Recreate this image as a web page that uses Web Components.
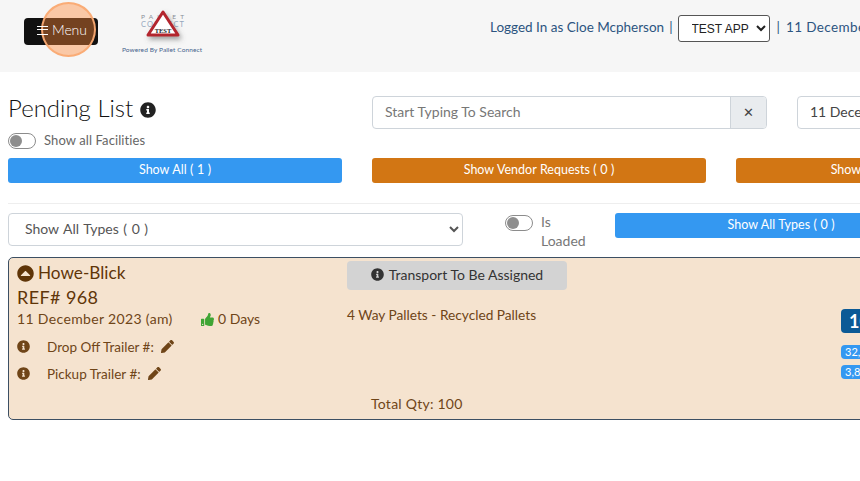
<!DOCTYPE html>
<html lang="en">
<head>
<meta charset="utf-8">
<title>Pending List</title>
<style>
  html, body { margin: 0; height: 100%; overflow: hidden; background: #fff; }
  body { font-family: Lato, "Noto Sans", sans-serif; color: #666; }
</style>
</head>
<body>
<app-header></app-header>
<pending-head></pending-head>
<filter-bar></filter-bar>
<order-card></order-card>

<script>
const ICONS = {
  info: ['0 0 512 512', 'M256 8C119.043 8 8 119.083 8 256c0 136.997 111.043 248 248 248s248-111.003 248-248C504 119.083 392.957 8 256 8zm0 110c23.196 0 42 18.804 42 42s-18.804 42-42 42-42-18.804-42-42 18.804-42 42-42zm56 254c0 6.627-5.373 12-12 12h-88c-6.627 0-12-5.373-12-12v-24c0-6.627 5.373-12 12-12h12v-64h-12c-6.627 0-12-5.373-12-12v-24c0-6.627 5.373-12 12-12h64c6.627 0 12 5.373 12 12v100h12c6.627 0 12 5.373 12 12v24z'],
  pencil: ['0 0 512 512', 'M497.9 142.1l-46.1 46.1c-4.7 4.7-12.3 4.7-17 0l-111-111c-4.7-4.7-4.7-12.3 0-17l46.1-46.1c18.7-18.7 49.1-18.7 67.9 0l60.1 60.1c18.8 18.7 18.8 49.1 0 67.9zM284.2 99.8L21.6 362.4.4 483.9c-2.9 16.4 11.4 30.6 27.8 27.8l121.5-21.3 262.6-262.6c4.7-4.7 4.7-12.3 0-17l-111-111c-4.8-4.7-12.4-4.7-17.1 0z'],
  thumb: ['0 0 512 512', 'M104 224H24c-13.255 0-24 10.745-24 24v240c0 13.255 10.745 24 24 24h80c13.255 0 24-10.745 24-24V248c0-13.255-10.745-24-24-24zM64 472c-13.255 0-24-10.745-24-24s10.745-24 24-24 24 10.745 24 24-10.745 24-24 24zM384 81.452c0 42.416-25.97 66.208-33.277 94.548h101.723c33.397 0 59.397 27.746 59.553 58.098.084 17.938-7.546 37.249-19.439 49.197l-.11.11c9.836 23.337 8.237 56.037-9.308 79.469 8.681 25.895-.069 57.704-16.382 74.757 4.298 17.598 2.244 32.575-6.148 44.632C440.202 511.587 389.616 512 346.839 512l-2.845-.001c-48.287-.017-87.806-17.598-119.56-31.725-15.957-7.099-36.821-15.887-52.651-16.178-6.54-.12-11.783-5.457-11.783-11.998v-213.77c0-3.2 1.282-6.271 3.558-8.521 39.614-39.144 56.648-80.587 89.117-113.111 14.804-14.832 20.188-37.236 25.393-58.902C282.515 39.293 291.817 0 312 0c24 0 72 8 72 81.452z'],
  collapse: ['0 0 512 512', 'M256 8C119 8 8 119 8 256s111 248 248 248 248-111 248-248S393 8 256 8zM128 330c-11 0-17-13-9-21l128-128c5-5 13-5 18 0l128 128c8 8 2 21-9 21z']
};

class FaIcon extends HTMLElement {
  connectedCallback() {
    const icon = ICONS[this.getAttribute('name')];
    const root = this.shadowRoot || this.attachShadow({ mode: 'open' });
    root.innerHTML = `
      <style>
        :host { display: inline-flex; width: var(--size, 14px); height: var(--size, 14px); color: inherit; flex: none; }
        svg { width: 100%; height: 100%; fill: currentColor; display: block; }
      </style>
      <svg viewBox="${icon[0]}"><path fill-rule="evenodd" d="${icon[1]}"/></svg>`;
  }
}
customElements.define('fa-icon', FaIcon);

const headerTemplate = document.createElement('template');
headerTemplate.innerHTML = `
  <style>
    :host { display: flex; align-items: flex-start; height: 72px; background: #f6f6f6; white-space: nowrap; overflow: hidden; position: relative; }
    .menu {
      margin: 18px 0 0 24px; width: 74px; height: 27px; box-sizing: border-box; background: #111; color: #fff;
      border-radius: 4px; display: flex; align-items: center; gap: 4px; padding: 0 0 6px 13px; flex: none;
      font-size: 14px; font-weight: 300; letter-spacing: -.1px;
    }
    .bars { width: 11px; height: 9px; margin-top: 3px; border-top: 1.5px solid #fff; border-bottom: 1.5px solid #fff; position: relative; box-sizing: border-box; z-index: 2; }
    .bars::after { content: ''; position: absolute; left: 0; right: 0; top: 2.25px; height: 1.5px; background: #fff; }
    .label { position: relative; z-index: 2; margin-top: 2px; }
    .pulse {
      position: absolute; left: 41px; top: 2px; width: 55px; height: 55px; box-sizing: border-box; border-radius: 50%; z-index: 1;
      background: rgba(255, 136, 56, .42); border: 2px solid rgba(250, 170, 115, .95);
    }
    .logo { margin: 9px 0 0 24px; width: 80px; height: 48px; flex: none; display: block; overflow: visible; }
    .user { margin: 15px 0 0 auto; display: flex; align-items: center; height: 27px; color: #2c5480; font-size: 13.5px; gap: 5px; width: 370px; flex: none; }
    .user span { flex: none; margin-bottom: 3px; }
    .user .bar2 { margin-left: 2px; }
    .user .today { letter-spacing: .4px; margin-left: 1px; }
    select {
      width: 92px; height: 27px; flex: none; box-sizing: border-box; background: #fff; border: 1px solid #555; border-radius: 3px;
      font: 12px "Liberation Sans", sans-serif; color: #222; padding-left: 9px;
    }
  </style>
  <div class="menu"><span class="bars"></span><span class="label">Menu</span></div>
  <div class="pulse"></div>
  <svg class="logo" viewBox="0 0 80 48">
    <defs><filter id="s" x="-40%" y="-40%" width="180%" height="180%"><feDropShadow dx="2" dy="3" stdDeviation="2.5" flood-color="#555" flood-opacity=".55"/></filter></defs>
    <text x="19" y="10" textLength="43" font-family="Lato, sans-serif" font-size="6.5" fill="#8a8f98">PALLET</text>
    <text x="19" y="18" textLength="43" font-family="Lato, sans-serif" font-size="7.5" fill="#93a6bd">CONNECT</text>
    <path d="M41 3 L56 26 H26 Z" fill="#fff" stroke="#b3252f" stroke-width="3" stroke-linejoin="round" filter="url(#s)"/>
    <text x="41" y="24" text-anchor="middle" font-family="'Liberation Serif', serif" font-weight="700" font-size="6.5" fill="#222">TEST</text>
    <text x="0" y="42.5" textLength="80" font-family="Lato, sans-serif" font-size="6.5" fill="#46638c">Powered By Pallet Connect</text>
  </svg>
  <div class="user">
    <span>Logged In as Cloe Mcpherson</span><span>|</span>
    <select><option>TEST APP</option></select>
    <span class="bar2">|</span><span class="today">11 December 2023</span>
  </div>
`;
class AppHeader extends HTMLElement {
  constructor() {
    super();
    this.attachShadow({ mode: 'open' }).appendChild(headerTemplate.content.cloneNode(true));
  }
}
customElements.define('app-header', AppHeader);

const switchTemplate = document.createElement('template');
switchTemplate.innerHTML = `
  <style>
    :host { display: inline-block; width: 28px; height: 16px; box-sizing: border-box; border: 1px solid #8c8c8c; border-radius: 9px; background: #fff; position: relative; flex: none; }
    i { position: absolute; left: 1px; top: 1px; width: 12px; height: 12px; border-radius: 50%; background: #8e8e8e; }
  </style>
  <i></i>
`;
class ToggleSwitch extends HTMLElement {
  constructor() {
    super();
    this.attachShadow({ mode: 'open' }).appendChild(switchTemplate.content.cloneNode(true));
  }
}
customElements.define('toggle-switch', ToggleSwitch);

const buttonTemplate = document.createElement('template');
buttonTemplate.innerHTML = `
  <style>
    :host { display: flex; align-items: center; justify-content: center; box-sizing: border-box; width: 334px; height: 25px; padding-bottom: 2px; flex: none; border-radius: 3px; background: #3498f1; color: #fff; font-size: 12.5px; word-spacing: .3px; white-space: nowrap; }
    :host([tone="orange"]) { background: #d27614; }
  </style>
  <slot></slot>
`;
class FilterButton extends HTMLElement {
  constructor() {
    super();
    this.attachShadow({ mode: 'open' }).appendChild(buttonTemplate.content.cloneNode(true));
  }
}
customElements.define('filter-button', FilterButton);

const headTemplate = document.createElement('template');
headTemplate.innerHTML = `
  <style>
    :host { display: block; padding: 22px 0 0 8px; white-space: nowrap; overflow: hidden; }
    .top { display: flex; gap: 30px; height: 64px; }
    .title { width: 334px; flex: none; }
    h1 { margin: 0; height: 26px; display: flex; align-items: center; gap: 7px; font-size: 24px; font-weight: 300; color: #111; --size: 16px; }
    h1 fa-icon { margin-top: 5px; color: #222; }
    .all { display: flex; align-items: flex-start; gap: 8px; margin-top: 13px; font-size: 13px; color: #666; }
    .all span { line-height: 15px; letter-spacing: .1px; }
    .search { width: 395px; height: 33px; margin-top: 2px; flex: none; display: flex; box-sizing: border-box; border: 1px solid #ced4da; border-radius: 4px; }
    .search span { flex: 1; padding-left: 12px; line-height: 30px; font-size: 14px; color: #777; }
    .search b { width: 35px; border-left: 1px solid #ced4da; background: #e9ecef; border-radius: 0 3px 3px 0; font-weight: 400; font-size: 13px; color: #444; text-align: center; line-height: 30px; }
    .date { width: 300px; height: 33px; margin-top: 2px; flex: none; box-sizing: border-box; border: 1px solid #ced4da; border-radius: 4px; padding-left: 12px; line-height: 30px; font-size: 14px; color: #444; }
    .row { display: flex; gap: 30px; margin-top: 0; }
    hr { border: 0; border-top: 1px solid #eee; margin: 20px 0 0 0; }
  </style>
  <div class="top">
    <div class="title">
      <h1>Pending List <fa-icon name="info"></fa-icon></h1>
      <div class="all"><toggle-switch></toggle-switch><span>Show all Facilities</span></div>
    </div>
    <div class="search"><span>Start Typing To Search</span><b>✕</b></div>
    <div class="date">11 December 2023</div>
  </div>
  <div class="row">
    <filter-button>Show All ( 1 )</filter-button>
    <filter-button tone="orange">Show Vendor Requests ( 0 )</filter-button>
    <filter-button tone="orange">Show Trailer Requests ( 0 )</filter-button>
  </div>
  <hr>
`;
class PendingHead extends HTMLElement {
  constructor() {
    super();
    this.attachShadow({ mode: 'open' }).appendChild(headTemplate.content.cloneNode(true));
  }
}
customElements.define('pending-head', PendingHead);

const filterTemplate = document.createElement('template');
filterTemplate.innerHTML = `
  <style>
    :host { display: flex; align-items: flex-start; padding: 9px 0 0 8px; height: 44px; white-space: nowrap; overflow: hidden; }
    select {
      width: 455px; height: 33px; flex: none; box-sizing: border-box; background: #fff; border: 1px solid #ced4da; border-radius: 4px;
      font: 14px Lato, sans-serif; word-spacing: 1px; color: #555; padding: 0 0 2px 12px;
    }
    toggle-switch { margin: 2px 0 0 42px; }
    .loaded { margin: -1px 31px 0 8px; width: 43px; font-size: 14px; line-height: 19px; color: #777; white-space: normal; flex: none; }
    filter-button { width: 332px; }
  </style>
  <select><option>Show All Types ( 0 )</option></select>
  <toggle-switch></toggle-switch>
  <span class="loaded">Is Loaded</span>
  <filter-button>Show All Types ( 0 )</filter-button>
`;
class FilterBar extends HTMLElement {
  constructor() {
    super();
    this.attachShadow({ mode: 'open' }).appendChild(filterTemplate.content.cloneNode(true));
  }
}
customElements.define('filter-bar', FilterBar);

const cardTemplate = document.createElement('template');
cardTemplate.innerHTML = `
  <style>
    :host {
      display: grid; grid-template-columns: 330px 494px 120px; box-sizing: border-box; width: 1000px; height: 163px; margin-left: 8px;
      border: 1px solid #3c4f63; border-radius: 5px; background: #f5e3cf; color: #6f4518; font-size: 14px; white-space: nowrap;
    }
    .left { padding: 3px 0 0 8px; }
    .name { display: flex; align-items: center; gap: 4px; font-size: 17.2px; line-height: 24px; color: #5f3508; --size: 17px; }
    .ref { font-size: 18px; line-height: 25px; letter-spacing: .4px; color: #5f3508; }
    .when { display: flex; line-height: 20px; margin-top: -1px; }
    .when > span:first-child { width: 184px; letter-spacing: .35px; }
    .days { display: flex; align-items: center; gap: 4px; --size: 13px; }
    .days fa-icon { color: #3fa535; }
    .trailer { display: flex; align-items: center; height: 27px; font-size: 13.5px; --size: 13px; }
    .trailer.first { margin-top: 4px; }
    .trailer span { margin: 0 7px 0 17px; }
    .mid { padding: 3px 0 0 8px; display: flex; flex-direction: column; }
    .assign { width: 220px; height: 29px; padding-bottom: 2px; box-sizing: border-box; background: #d3d3d3; border-radius: 4px; color: #333; display: flex; align-items: center; justify-content: center; gap: 5px; --size: 13px; }
    .prod { margin-top: 15px; line-height: 20px; font-size: 13.7px; }
    .qty { margin: 69px 0 0 24px; line-height: 20px; letter-spacing: .25px; }
    .right { padding: 51px 0 0 8px; display: flex; flex-direction: column; align-items: flex-start; }
    .count { background: #0b5a96; color: #fff; font-size: 18px; font-weight: 700; width: 60px; height: 24px; line-height: 24px; padding-left: 8px; box-sizing: border-box; border-radius: 4px; }
    .pill { background: #3498f1; color: #fff; font-size: 11px; line-height: 14px; height: 14px; padding: 0 6px 0 4px; border-radius: 4px; }
    .pill.a { margin-top: 12px; }
    .pill.b { margin-top: 6px; }
  </style>
  <div class="left">
    <div class="name"><fa-icon name="collapse"></fa-icon>Howe-Blick</div>
    <div class="ref">REF# 968</div>
    <div class="when"><span>11 December 2023 (am)</span><span class="days"><fa-icon name="thumb"></fa-icon>0 Days</span></div>
    <div class="trailer first"><fa-icon name="info"></fa-icon><span>Drop Off Trailer #:</span><fa-icon name="pencil"></fa-icon></div>
    <div class="trailer"><fa-icon name="info"></fa-icon><span>Pickup Trailer #:</span><fa-icon name="pencil"></fa-icon></div>
  </div>
  <div class="mid">
    <div class="assign"><fa-icon name="info"></fa-icon>Transport To Be Assigned</div>
    <div class="prod">4 Way Pallets - Recycled Pallets</div>
    <div class="qty">Total Qty: 100</div>
  </div>
  <div class="right">
    <div class="count">100</div>
    <div class="pill a">32,500 kg</div>
    <div class="pill b">3,800 kg</div>
  </div>
`;
class OrderCard extends HTMLElement {
  constructor() {
    super();
    this.attachShadow({ mode: 'open' }).appendChild(cardTemplate.content.cloneNode(true));
  }
}
customElements.define('order-card', OrderCard);
</script>
</body>
</html>
